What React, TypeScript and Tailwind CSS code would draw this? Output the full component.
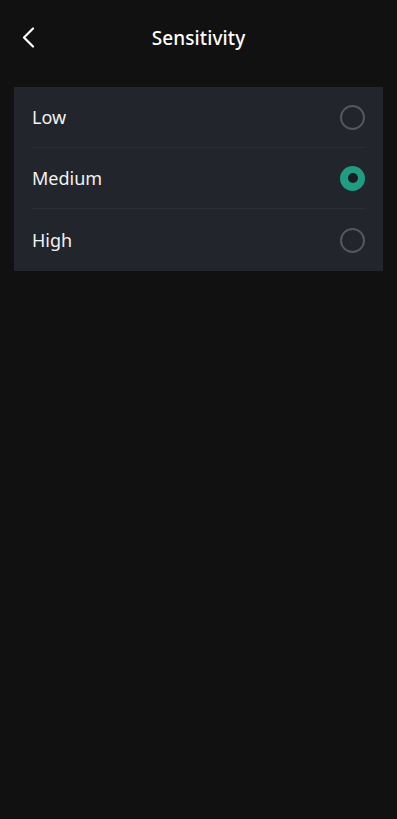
import React, { useState } from 'react';

const OPTIONS = ['Low', 'Medium', 'High'];

export default function App() {
  const [selected, setSelected] = useState('Medium');

  return (
    <div
      className="min-h-[819px] w-full bg-[#111111] text-white"
      style={{ fontFamily: '"Noto Sans", "Open Sans", sans-serif' }}
    >
      {/* Header */}
      <div className="relative flex h-[76px] items-center justify-center">
        <button className="absolute left-[21px] top-[27px]">
          <svg width="14" height="22" viewBox="0 0 14 22" fill="none">
            <path d="M12 1.5L3 10.5L12 19.5" stroke="white" strokeWidth="2.2" strokeLinecap="round" strokeLinejoin="round" />
          </svg>
        </button>
        <h1 className="text-[19px] font-medium tracking-[0.1px]">Sensitivity</h1>
      </div>

      {/* Options */}
      <div className="mx-[14px] mt-[11px] bg-[#22252c] px-[18px]">
        {OPTIONS.map((opt, i) => {
          const isSel = selected === opt;
          return (
            <div
              key={opt}
              onClick={() => setSelected(opt)}
              className={`flex cursor-pointer items-center justify-between ${
                i < OPTIONS.length - 1 ? 'h-[61px] border-b border-[#2b2e35]' : 'h-[62px]'
              }`}
            >
              <span className="text-[18px] text-[#f2f2f2]">{opt}</span>
              {isSel ? (
                <span className="flex h-[25px] w-[25px] items-center justify-center rounded-full bg-[#1f9c82]">
                  <span className="h-[10px] w-[10px] rounded-full bg-[#1a1d23]" />
                </span>
              ) : (
                <span className="h-[25px] w-[25px] rounded-full border-2 border-[#55575c]" />
              )}
            </div>
          );
        })}
      </div>
    </div>
  );
}
